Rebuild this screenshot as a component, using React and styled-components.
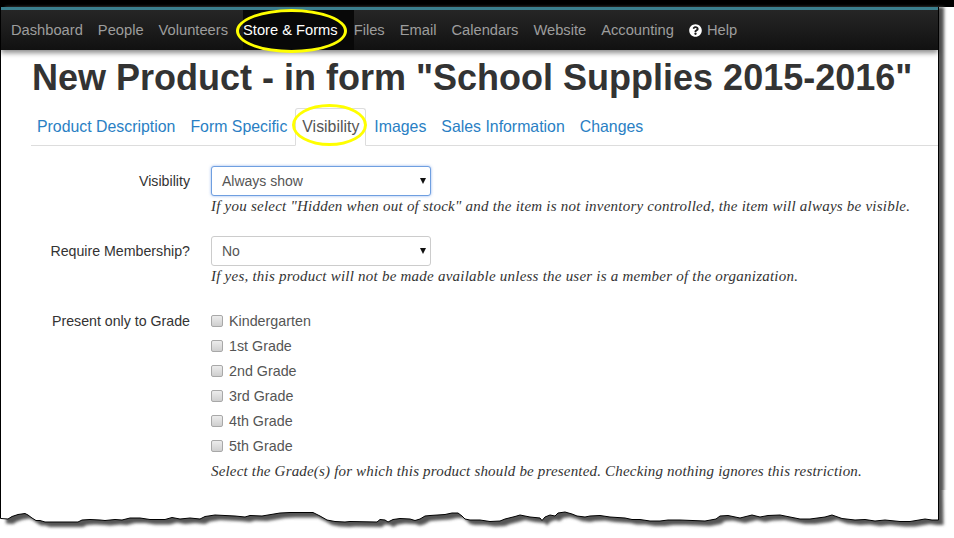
import React from "react";
import styled, { createGlobalStyle } from "styled-components";
import { FaQuestionCircle } from "react-icons/fa";

const Global = createGlobalStyle`
  html, body { margin: 0; padding: 0; background: #fff; }
  body { width: 954px; height: 538px; overflow: hidden; font-family: "Liberation Sans", Arial, sans-serif; font-size: 14px; color: #333; }
`;

const Page = styled.div`
  position: relative;
  width: 954px;
  height: 538px;
  overflow: hidden;
  display: flex;
  flex-direction: column;
`;
const TopBand = styled.div`
  flex: 0 0 7px;
  background: #000;
`;
const Sheet = styled.div`
  flex: 1;
  width: 939px;
  box-sizing: border-box;
  background: #fff;
  border-left: 1px solid #000;
  border-right: 1px solid #000;
  box-shadow: 5px 0 3px #555;
`;
const Nav = styled.nav`
  display: flex;
  height: 40px;
  padding-left: 10px;
  border-top: 3px solid #3b7f8e;
  background: linear-gradient(#262626, #111);
  box-shadow: 0 3px 5px rgba(0, 0, 0, 0.45);
  align-items: stretch;
`;
const NavItem = styled.a`
  position: relative;
  display: flex;
  align-items: center;
  gap: 5px;
  padding-right: ${(p) => (p.$active ? 16 : 15)}px;
  color: ${(p) => (p.$active ? "#fff" : "#9d9d9d")};
  background: ${(p) => (p.$active ? "#080808" : "transparent")};
  font-size: 14.7px;
  svg { color: #fff; font-size: 13px; }
`;
const NavRing = styled.span`
  position: absolute;
  left: -7px;
  top: -1px;
  width: 105px;
  height: 38px;
  border: 3px solid #ffff00;
  border-radius: 50%;
`;
const Title = styled.h1`
  margin: 0;
  padding: 8px 0 0 31px;
  height: 50px;
  font-size: 36px;
  line-height: 39px;
  font-weight: 700;
  color: #333;
  white-space: nowrap;
`;
const Tabs = styled.div`
  display: flex;
  height: 37px;
  margin-left: 30px;
  border-bottom: 1px solid #ddd;
  gap: 1px;
`;
const Tab = styled.a`
  position: relative;
  display: flex;
  align-items: center;
  box-sizing: border-box;
  height: 38px;
  padding: 0 7px;
  font-size: 15.87px;
  color: ${(p) => (p.$active ? "#555" : "#2a7fc4")};
  &:first-child { margin-left: -1px; }
  ${(p) =>
    p.$active
      ? "background:#fff;border:1px solid #ddd;border-bottom-color:#fff;border-radius:3px 3px 0 0;padding:0 6px;"
      : ""}
`;
const TabRing = styled.span`
  position: absolute;
  left: -4px;
  top: -5px;
  width: 69px;
  height: 36px;
  border: 3px solid #ffff00;
  border-radius: 50%;
`;
const Form = styled.form`
  display: flex;
  flex-direction: column;
  gap: 20px;
  padding-top: 20px;
`;
const Field = styled.div`
  display: grid;
  grid-template-columns: 189px 1fr;
  column-gap: 21px;
`;
const Label = styled.label`
  text-align: right;
  font-size: 14.2px;
  line-height: 30px;
  color: #333;
`;
const SelectBox = styled.div`
  position: relative;
  width: 220px;
  height: 30px;
  box-sizing: border-box;
  display: flex;
  align-items: center;
  padding-left: 10px;
  color: #555;
  background: #fff;
  border-radius: 3px;
  border: 1px solid ${(p) => (p.$focus ? "#6f9fe0" : "#ccc")};
  box-shadow: ${(p) => (p.$focus ? "0 0 3px rgba(102,150,230,.7)" : "none")};
  &::after {
    content: "";
    position: absolute;
    right: 4px;
    top: 11px;
    border-left: 3.5px solid transparent;
    border-right: 3.5px solid transparent;
    border-top: 6px solid #111;
  }
`;
const Hint = styled.div`
  font-family: "Liberation Serif", "Times New Roman", serif;
  font-style: italic;
  font-size: 15px;
  line-height: 20px;
  color: #333;
  letter-spacing: ${(p) => p.$ls || "0.23px"};
  margin-top: ${(p) => p.$top || 0}px;
  white-space: nowrap;
`;
const Checks = styled.div`
  display: flex;
  flex-direction: column;
  padding-top: 2px;
`;
const CheckRow = styled.div`
  display: flex;
  align-items: center;
  height: 25px;
  gap: 6px;
  font-size: 14.3px;
  color: #555;
`;
const Box = styled.span`
  width: 10px;
  height: 10px;
  border: 1px solid #a8a8a8;
  border-radius: 2px;
  background: linear-gradient(#ececec, #cfcfcf);
`;
const EdgeSvg = styled.svg`
  position: absolute;
  left: 0;
  top: 490px;
  display: block;
`;

const edge =
  "1,518.5 8,519 12,516.5 18,514.5 25,513.5 28,515 32,518 36,520.5 40,520.5 45,522 60,522 78,522 82,520 90,519.5 100,520 105,520.5 115,519.5 122,520 130,518 140,518 150,519.5 165,519.5 172,517.5 180,519 190,518 200,519 205,516.5 215,515 225,515.5 235,516 245,517 250,515.5 262,516 280,513 290,512.5 305,512.5 313,512.5 320,516 327,520 335,521.5 345,522 350,521.5 377,522 380,519.5 385,520 388,522 393,519.5 400,518.5 410,519 415,520.5 420,519 425,516 430,515.5 445,514.5 452,513 458,513 462,516 465,519 470,520 480,520 490,521.5 500,521 505,519 515,516.5 520,515 530,517 540,518 542,520.5 545,517 550,515 555,516 558,513 565,512 572,514 577,516 585,517 590,516 600,515.5 610,517 625,518 632,519.5 640,519.5 650,521 660,521 668,520 680,520 705,521 716,519 720,516 728,515.5 740,518 752,515 760,517 768,515.5 780,515 790,517 800,519 810,519 825,517 832,515 842,518.5 855,520 865,519.5 875,521 885,520 900,521.5 910,521.5 925,519 932,520 938.5,520";

const TornEdge = () => (
  <EdgeSvg width="954" height="48" viewBox="0 490 954 48">
    <defs>
      <filter id="blur" x="-5%" y="-50%" width="110%" height="200%">
        <feGaussianBlur stdDeviation="1.5" />
      </filter>
    </defs>
    <rect x="0" y="490" width="954" height="48" fill="#fff" />
    <polygon
      points={`1,470 ${edge} 938,470`}
      transform="translate(5 5)"
      fill="#555"
      filter="url(#blur)"
    />
    <polygon points={`1,470 ${edge} 938.5,470`} fill="#fff" />
    <polyline points={`0.5,480 0.5,518.5 ${edge} 938.5,480`} fill="none" stroke="#000" strokeWidth="1" />
  </EdgeSvg>
);

const navItems = ["Dashboard", "People", "Volunteers", "Store & Forms", "Files", "Email", "Calendars", "Website", "Accounting"];
const tabs = ["Product Description", "Form Specific", "Visibility", "Images", "Sales Information", "Changes"];
const grades = ["Kindergarten", "1st Grade", "2nd Grade", "3rd Grade", "4th Grade", "5th Grade"];

export default function App() {
  return (
    <>
      <Global />
      <Page>
        <TopBand />
        <Sheet>
          <Nav>
            {navItems.map((n) => (
              <NavItem key={n} $active={n === "Store & Forms"}>
                {n}
                {n === "Store & Forms" && <NavRing />}
              </NavItem>
            ))}
            <NavItem>
              <FaQuestionCircle />
              Help
            </NavItem>
          </Nav>
          <Title>New Product - in form "School Supplies 2015-2016"</Title>
          <Tabs>
            {tabs.map((t) => (
              <Tab key={t} $active={t === "Visibility"}>
                {t}
                {t === "Visibility" && <TabRing />}
              </Tab>
            ))}
          </Tabs>
          <Form>
            <Field>
              <Label>Visibility</Label>
              <div>
                <SelectBox $focus>Always show</SelectBox>
                <Hint>If you select "Hidden when out of stock" and the item is not inventory controlled, the item will always be visible.</Hint>
              </div>
            </Field>
            <Field>
              <Label>Require Membership?</Label>
              <div>
                <SelectBox>No</SelectBox>
                <Hint>If yes, this product will not be made available unless the user is a member of the organization.</Hint>
              </div>
            </Field>
            <Field>
              <Label>Present only to Grade</Label>
              <div>
                <Checks>
                  {grades.map((g) => (
                    <CheckRow key={g}>
                      <Box />
                      {g}
                    </CheckRow>
                  ))}
                </Checks>
                <Hint $ls="0.18px" $top={3}>Select the Grade(s) for which this product should be presented. Checking nothing ignores this restriction.</Hint>
              </div>
            </Field>
          </Form>
        </Sheet>
        <TornEdge />
      </Page>
    </>
  );
}
